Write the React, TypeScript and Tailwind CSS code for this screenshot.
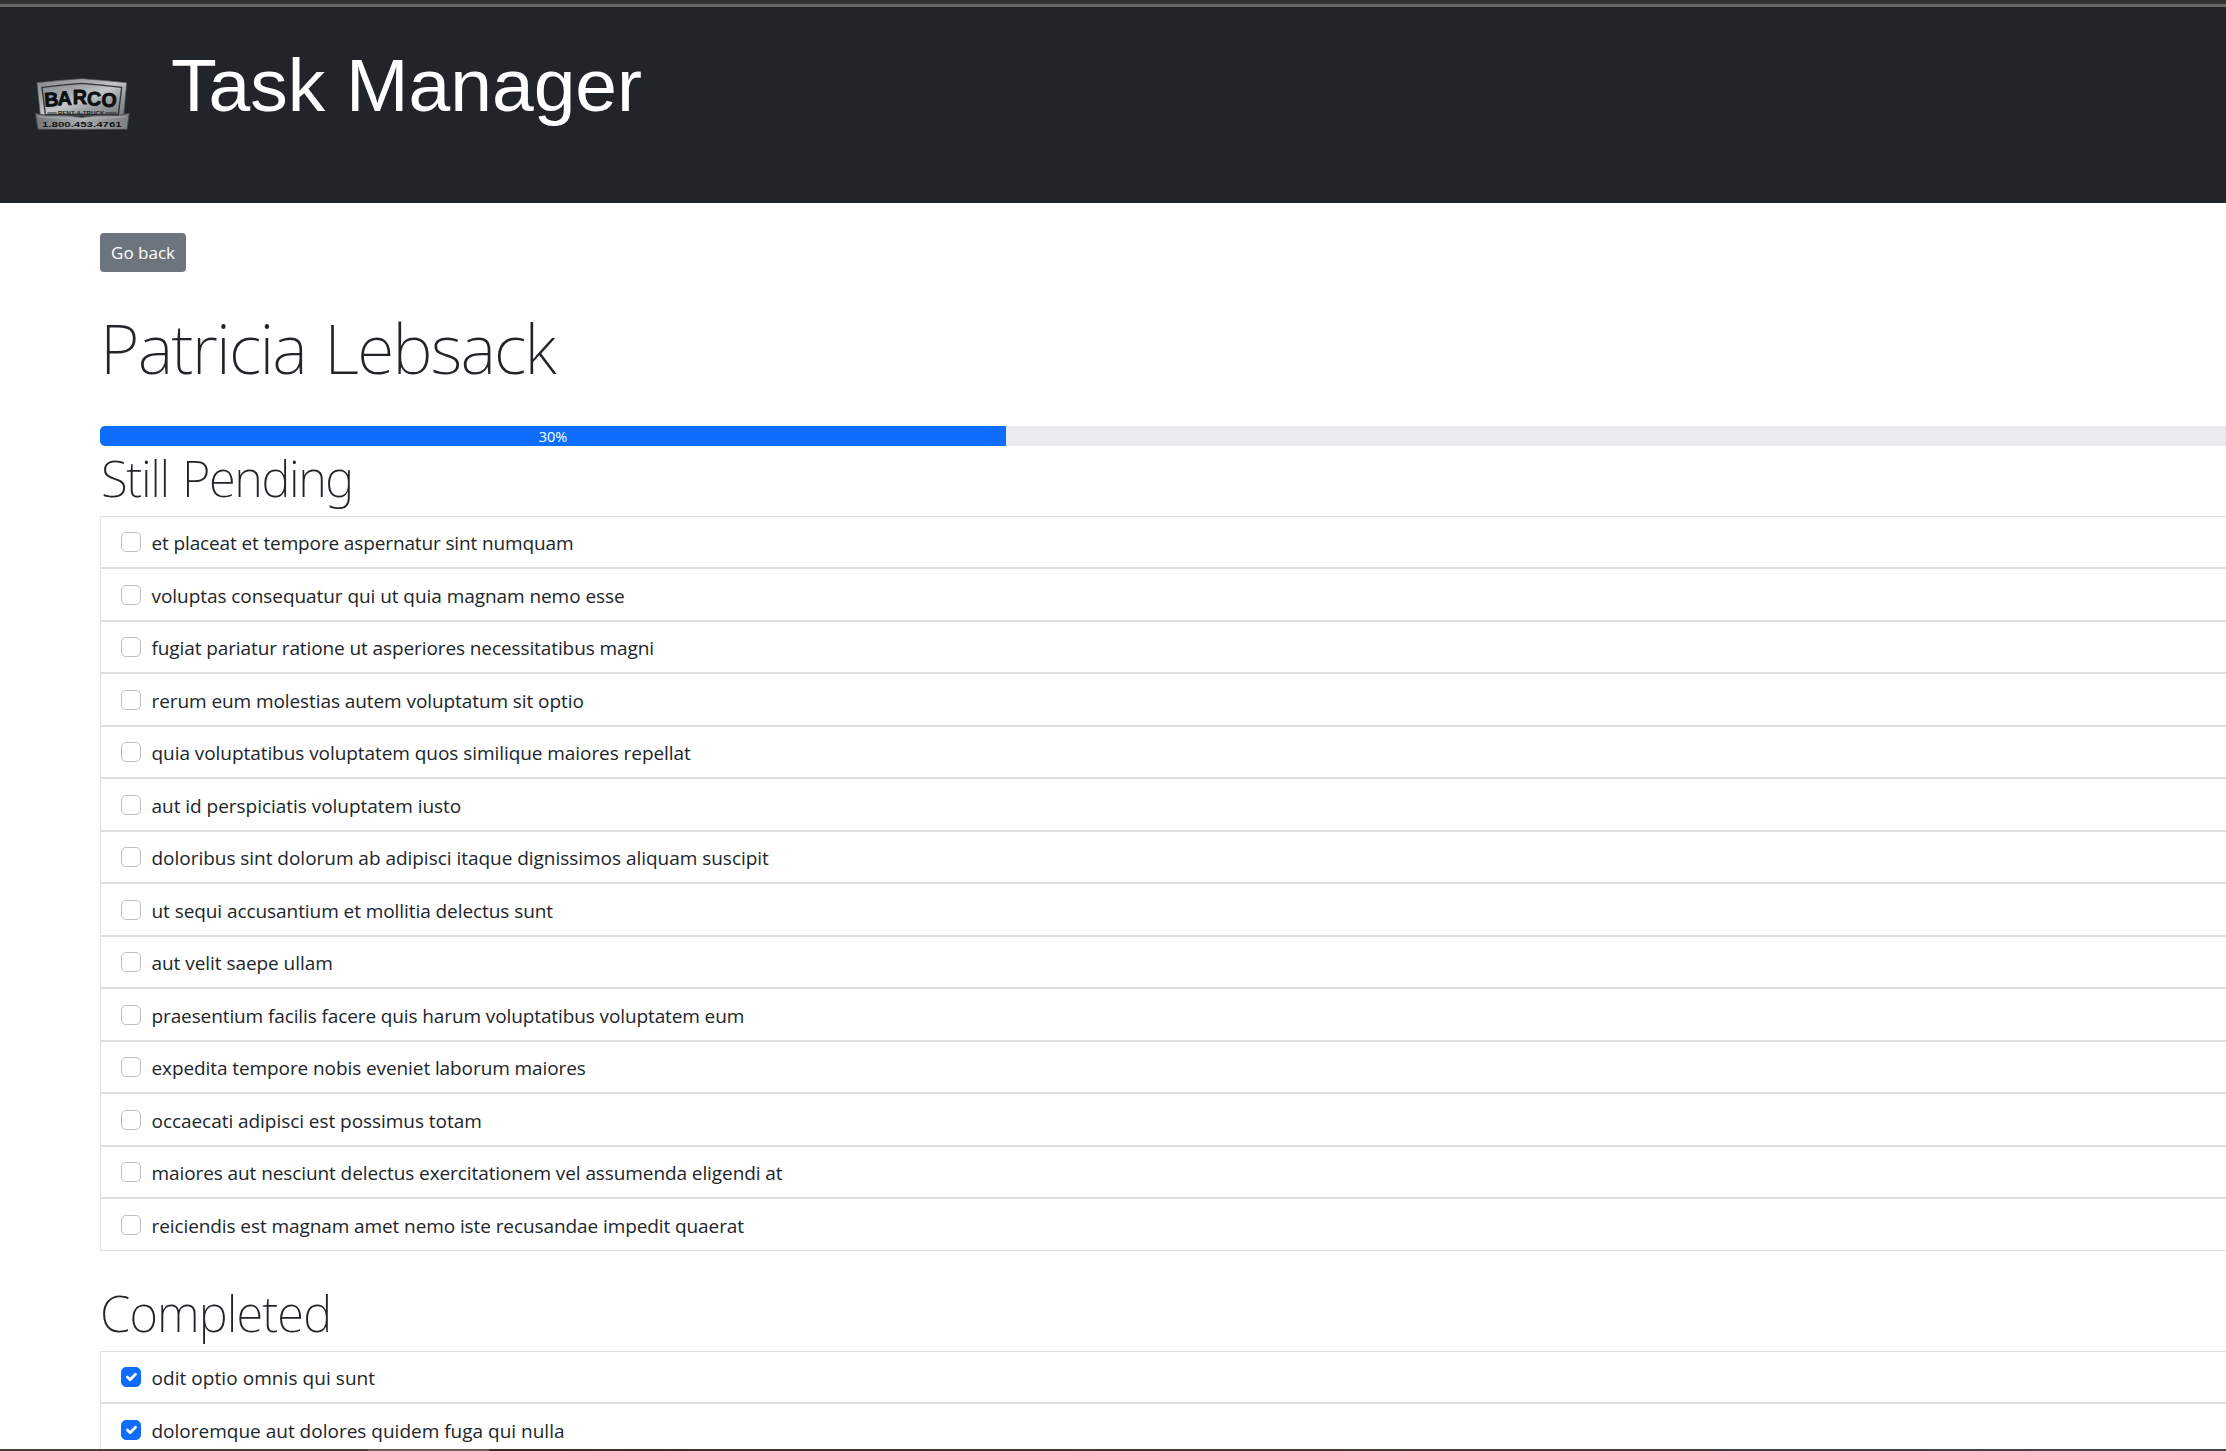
type Task = { title: string; tracking: string };

const pending: Task[] = [
  { title: "et placeat et tempore aspernatur sint numquam", tracking: "tracking-[-0.13px]" },
  { title: "voluptas consequatur qui ut quia magnam nemo esse", tracking: "tracking-[-0.06px]" },
  { title: "fugiat pariatur ratione ut asperiores necessitatibus magni", tracking: "tracking-[-0.1px]" },
  { title: "rerum eum molestias autem voluptatum sit optio", tracking: "tracking-[-0.08px]" },
  { title: "quia voluptatibus voluptatem quos similique maiores repellat", tracking: "tracking-[-0.06px]" },
  { title: "aut id perspiciatis voluptatem iusto", tracking: "tracking-[-0.03px]" },
  { title: "doloribus sint dolorum ab adipisci itaque dignissimos aliquam suscipit", tracking: "tracking-[-0.03px]" },
  { title: "ut sequi accusantium et mollitia delectus sunt", tracking: "tracking-[-0.07px]" },
  { title: "aut velit saepe ullam", tracking: "tracking-[-0.05px]" },
  { title: "praesentium facilis facere quis harum voluptatibus voluptatem eum", tracking: "tracking-[-0.11px]" },
  { title: "expedita tempore nobis eveniet laborum maiores", tracking: "tracking-[-0.09px]" },
  { title: "occaecati adipisci est possimus totam", tracking: "tracking-[-0.05px]" },
  { title: "maiores aut nesciunt delectus exercitationem vel assumenda eligendi at", tracking: "tracking-[-0.09px]" },
  { title: "reiciendis est magnam amet nemo iste recusandae impedit quaerat", tracking: "tracking-[-0.09px]" },
];

const completed: Task[] = [
  { title: "odit optio omnis qui sunt", tracking: "tracking-[0.06px]" },
  { title: "doloremque aut dolores quidem fuga qui nulla", tracking: "tracking-[0px]" },
];

function Logo() {
  return (
    <svg viewBox="0 0 315 186" className="mt-[67px] ml-[30px] h-[62px] w-[105px] shrink-0">
      <defs>
        <linearGradient id="steel" x1="0" y1="0" x2="1" y2="1">
          <stop offset="0" stopColor="#85898c" />
          <stop offset="0.35" stopColor="#a9adb0" />
          <stop offset="0.5" stopColor="#c3c6c8" />
          <stop offset="0.7" stopColor="#9b9fa2" />
          <stop offset="1" stopColor="#777b7e" />
        </linearGradient>
        <linearGradient id="band" x1="0" y1="0" x2="1" y2="0">
          <stop offset="0" stopColor="#73777a" />
          <stop offset="0.5" stopColor="#a8acaf" />
          <stop offset="1" stopColor="#7b7f82" />
        </linearGradient>
      </defs>
      <path d="M21 26Q88 19 155 14Q222 19 290 26L281 124H31Z" fill="url(#steel)" stroke="#55595c" strokeWidth="2" />
      <path d="M36 40Q96 32 155 28Q214 32 275 40L265 122H46Z" fill="url(#steel)" stroke="#303438" strokeWidth="4" />
      <path d="M16 118L46 124H108L155 130L202 124H265L298 118L291 166H24Z" fill="url(#band)" stroke="#45494c" strokeWidth="2.5" />
      <path d="M24 128L150 136L290 128" fill="none" stroke="#b9bcbe" strokeWidth="2" />
      <text
        x="44 83 128 170 213"
        y="98 94 91 94 97"
        rotate="-4 -2 0 2 4"
        fontSize="59"
        fill="#0e0f10"
        stroke="#0e0f10"
        strokeWidth="2.5"
        className="font-['Liberation_Sans'] font-bold"
      >
        BARCO
      </text>
      <path d="M52 117H80M226 117H260" stroke="#24272a" strokeWidth="3" />
      <text x="84" y="124" fontSize="17" textLength="139" lengthAdjust="spacingAndGlyphs" fill="#1d1f21" className="font-['Liberation_Sans'] font-bold">
        RENT-A-TRUCK
      </text>
      <text x="36" y="158" fontSize="21" textLength="239" lengthAdjust="spacingAndGlyphs" fill="#101112" className="font-['Liberation_Sans'] font-bold">
        1.800.453.4761
      </text>
    </svg>
  );
}

function Checkbox({ checked }: { checked?: boolean }) {
  if (!checked) {
    return <span className="mt-[15.1px] size-5 shrink-0 rounded-[5px] border border-[#bfbfbf] bg-white" />;
  }
  return (
    <span className="mt-[15.1px] size-5 shrink-0 rounded-[5px] border border-[#0d6efd] bg-[#0d6efd]">
      <svg viewBox="0 0 20 20" className="size-[18px]" fill="none" stroke="#fff" strokeWidth="3" strokeLinecap="round" strokeLinejoin="round">
        <path d="M6 10l3 3l6-6" />
      </svg>
    </span>
  );
}

function TaskList({ tasks, checked }: { tasks: Task[]; checked?: boolean }) {
  return (
    <ul>
      {tasks.map((task) => (
        <li key={task.title} className="flex h-[52.5px] items-start gap-[10.5px] border border-[#dfdfdf] pl-5">
          <Checkbox checked={checked} />
          <span className={`mt-[11.1px] text-[19px] leading-[30px] whitespace-nowrap ${task.tracking}`}>{task.title}</span>
        </li>
      ))}
    </ul>
  );
}

export default function App() {
  return (
    <div className="flex h-[1451px] w-full flex-col overflow-hidden bg-white font-['Open_Sans',sans-serif] text-[#212529]">
      <div className="h-1 shrink-0 bg-[#333333]" />
      <div className="h-[3px] shrink-0 bg-[#666666]" />
      <header className="flex h-[196px] shrink-0 items-start bg-[#212529]">
        <Logo />
        <h1 className="mt-[33px] ml-[36px] font-['Liberation_Sans',Arial,sans-serif] text-[75px] leading-[90px] whitespace-nowrap text-white">
          Task Manager
        </h1>
      </header>
      <main className="min-h-0 flex-1 overflow-hidden pt-[30px] pl-[100px]">
        <div className="w-[3020px]">
          <button className="flex h-[39px] w-[86px] items-center justify-center rounded-[4px] bg-[#6c757d] text-[17px] whitespace-nowrap text-white">
            Go back
          </button>
          <h2 className="mt-[36px] font-['Noto_Sans',sans-serif] text-[68px] leading-[80px] font-extralight tracking-[-1.8px] [word-spacing:2.5px]">
            Patricia Lebsack
          </h2>
          <div className="mt-[38px] flex h-5 overflow-hidden rounded-[5px] bg-[#e9ecef]">
            <div className="flex w-[906px] items-center justify-center bg-[#0d6efd] pt-px text-[14.5px] leading-5 text-white">30%</div>
          </div>
          <h3 className="mt-[1.95px] mb-2 ml-px font-['Noto_Sans',sans-serif] text-[49px] leading-[60px] font-extralight tracking-[-1.4px] [word-spacing:2px]">
            Still Pending
          </h3>
          <TaskList tasks={pending} />
          <h3 className="mt-8 mb-2 font-['Noto_Sans',sans-serif] text-[49px] leading-[60px] font-extralight tracking-[-0.9px]">
            Completed
          </h3>
          <TaskList tasks={completed} checked />
        </div>
      </main>
      <div className="flex h-0.5 shrink-0">
        <div className="w-[368px] bg-[#4a403b]" />
        <div className="w-[121px] bg-[#6b5d54]" />
        <div className="flex-1 bg-linear-to-r from-[#3d2c24] to-[#46464a]" />
      </div>
    </div>
  );
}
